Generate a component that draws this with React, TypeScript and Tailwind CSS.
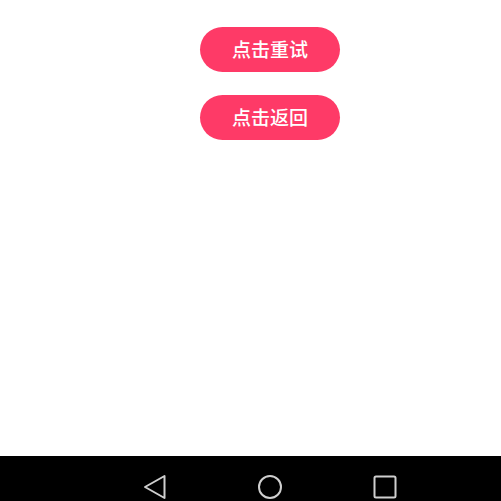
import { FunctionComponent } from "react"

const PillButton: FunctionComponent<{ label: string }> = ({ label }) => (
    <button className="flex h-[45px] w-[140px] items-center justify-center rounded-full bg-[#fe3a67] text-[19px] font-medium text-white">
        {label}
    </button>
)

// bottom system navigation: back, home, recents
const NavBar = () => (
    <div className="h-[45px] bg-black">
        <div className="flex items-start pl-[143px] pt-[18px]">
            <svg width="24" height="26" viewBox="0 0 24 26">
                <path d="M2 13 L21.5 2 L21.5 24 Z" fill="none" stroke="#cfcfcf" strokeWidth="2" strokeLinejoin="round" />
            </svg>
            <svg width="26" height="26" viewBox="0 0 26 26" className="ml-[90px]">
                <circle cx="13" cy="13" r="11" fill="none" stroke="#cfcfcf" strokeWidth="2" />
            </svg>
            <svg width="24" height="24" viewBox="0 0 24 24" className="ml-[90px] mt-[1px]">
                <rect x="1.5" y="1.5" width="21" height="21" rx="1.5" fill="none" stroke="#cfcfcf" strokeWidth="2" />
            </svg>
        </div>
    </div>
)

export default function App() {
    return (
        <div className="flex h-[501px] w-[501px] flex-col bg-white" style={{ fontFamily: '"Noto Sans CJK SC", "Noto Sans", sans-serif' }}>
            <div className="flex flex-1 flex-col items-start gap-[23px] pl-[200px] pt-[27px]">
                <PillButton label="点击重试" />
                <PillButton label="点击返回" />
            </div>
            <NavBar />
        </div>
    )
}
